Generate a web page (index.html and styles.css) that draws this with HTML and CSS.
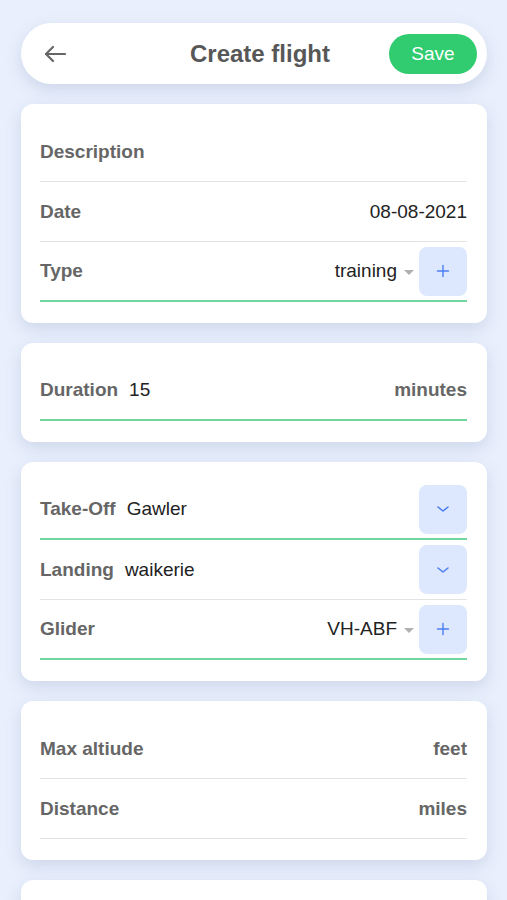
FILE: index.html
```html
<!DOCTYPE html>
<html lang="en">
<head>
  <meta charset="UTF-8" />
  <meta name="viewport" content="width=device-width, initial-scale=1.0"/>
  <title>Create flight</title>
  <link rel="stylesheet" href="styles.css">
</head>
<body>
  <div class="page">
    <header class="topbar">
      <button class="back" aria-label="Back">
        <svg width="24" height="18" viewBox="0 0 24 18" fill="none" stroke="#666" stroke-width="2.2" stroke-linecap="round" stroke-linejoin="round">
          <path d="M22 9H3"/>
          <path d="M10 2L3 9l7 7"/>
        </svg>
      </button>
      <h1 class="title">Create flight</h1>
      <div class="actions">
        <button class="save">Save</button>
      </div>
    </header>

    <section class="card">
      <div class="row">
        <span class="label">Description</span>
      </div>
      <div class="row">
        <span class="label">Date</span>
        <span class="value right">08-08-2021</span>
      </div>
      <div class="row active">
        <span class="label">Type</span>
        <span class="value right">training</span>
        <span class="caret"></span>
        <button class="icon-btn" aria-label="Add type">
          <svg width="14" height="14" viewBox="0 0 14 14" stroke="#4a7ff0" stroke-width="1.4" stroke-linecap="round"><path d="M7 1.5v11M1.5 7h11"/></svg>
        </button>
      </div>
    </section>

    <section class="card">
      <div class="row active">
        <span class="label">Duration</span>
        <span class="value inline">15</span>
        <span class="unit">minutes</span>
      </div>
    </section>

    <section class="card">
      <div class="row active">
        <span class="label">Take-Off</span>
        <span class="value inline grow">Gawler</span>
        <button class="icon-btn" aria-label="Choose take-off">
          <svg width="14" height="8" viewBox="0 0 14 8" fill="none" stroke="#4a7ff0" stroke-width="1.6" stroke-linecap="round" stroke-linejoin="round"><path d="M2 2l5 4 5-4"/></svg>
        </button>
      </div>
      <div class="row">
        <span class="label">Landing</span>
        <span class="value inline grow">waikerie</span>
        <button class="icon-btn" aria-label="Choose landing">
          <svg width="14" height="8" viewBox="0 0 14 8" fill="none" stroke="#4a7ff0" stroke-width="1.6" stroke-linecap="round" stroke-linejoin="round"><path d="M2 2l5 4 5-4"/></svg>
        </button>
      </div>
      <div class="row active">
        <span class="label">Glider</span>
        <span class="value right">VH-ABF</span>
        <span class="caret"></span>
        <button class="icon-btn" aria-label="Add glider">
          <svg width="14" height="14" viewBox="0 0 14 14" stroke="#4a7ff0" stroke-width="1.4" stroke-linecap="round"><path d="M7 1.5v11M1.5 7h11"/></svg>
        </button>
      </div>
    </section>

    <section class="card">
      <div class="row">
        <span class="label">Max altiude</span>
        <span class="unit">feet</span>
      </div>
      <div class="row">
        <span class="label">Distance</span>
        <span class="unit">miles</span>
      </div>
    </section>

    <!-- next card, just below the fold -->
    <section class="card">
      <div class="row"></div>
    </section>
  </div>
</body>
</html>
```
FILE: styles.css
```css
* {
  box-sizing: border-box;
}

body {
  margin: 0;
  background: #e9effc;
  font-family: 'Liberation Sans', Arial, sans-serif;
}

.page {
  padding: 23px 20px 40px 21px;
}

button {
  font-family: inherit;
  border: none;
  cursor: pointer;
}

.topbar {
  display: grid;
  grid-template-columns: 1fr auto 1fr;
  align-items: center;
  height: 61px;
  padding: 0 10px 0 22px;
  background: white;
  border-radius: 31px;
  box-shadow: 0 6px 16px rgba(110, 130, 175, 0.22);
}

.back {
  justify-self: start;
  display: flex;
  padding: 0;
  background: none;
}

.title {
  margin: 0;
  font-size: 24px;
  font-weight: bold;
  color: #575757;
}

.actions {
  justify-self: end;
}

.save {
  width: 88px;
  height: 40px;
  border-radius: 20px;
  background: #30cc6f;
  color: white;
  font-size: 19px;
}

.card {
  margin-top: 20px;
  padding: 18px 20px 21px 19px;
  background: white;
  border-radius: 12px;
  box-shadow: 0 6px 16px rgba(110, 130, 175, 0.22);
}

.row {
  display: flex;
  align-items: center;
  height: 60px;
  border-bottom: 1px solid #e3e3e3;
  font-size: 19px;
}

.row.active {
  border-bottom: 2px solid #70d69b;
}

.label {
  font-weight: bold;
  color: #666;
}

.value {
  color: #222;
}

.value.right {
  margin-left: auto;
}

.value.inline {
  margin-left: 11px;
}

.value.grow {
  flex: 1;
}

.unit {
  margin-left: auto;
  font-weight: bold;
  color: #666;
}

.caret {
  width: 0;
  height: 0;
  margin: 2px 5px 0 7px;
  border-left: 5.5px solid transparent;
  border-right: 5.5px solid transparent;
  border-top: 5px solid #b0b0b0;
}

.icon-btn {
  display: flex;
  align-items: center;
  justify-content: center;
  width: 48px;
  height: 49px;
  padding: 0;
  border-radius: 8px;
  background: #dde7fd;
}
```
